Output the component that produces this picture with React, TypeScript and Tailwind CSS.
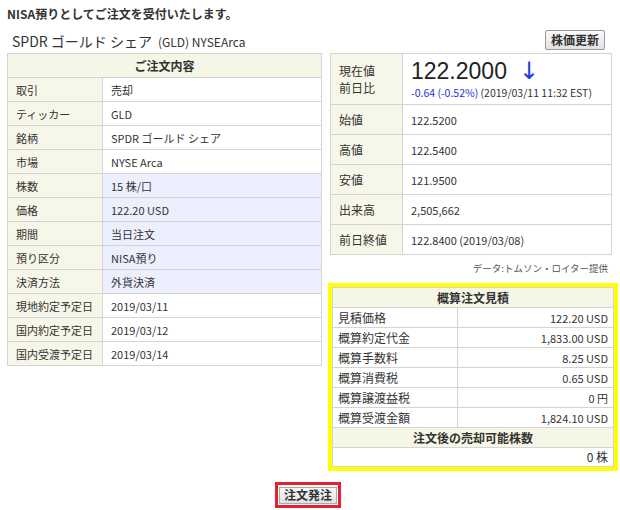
const jp = "font-['Noto_Sans_CJK_JP','Noto_Sans',sans-serif]"

const orderRows: { label: string; value: string; hl?: boolean }[] = [
  { label: '取引', value: '売却' },
  { label: 'ティッカー', value: 'GLD' },
  { label: '銘柄', value: 'SPDR ゴールド シェア' },
  { label: '市場', value: 'NYSE Arca' },
  { label: '株数', value: '15 株/口', hl: true },
  { label: '価格', value: '122.20 USD', hl: true },
  { label: '期間', value: '当日注文', hl: true },
  { label: '預り区分', value: 'NISA預り', hl: true },
  { label: '決済方法', value: '外貨決済', hl: true },
  { label: '現地約定予定日', value: '2019/03/11' },
  { label: '国内約定予定日', value: '2019/03/12' },
  { label: '国内受渡予定日', value: '2019/03/14' },
]

const quoteRows = [
  { label: '始値', value: '122.5200' },
  { label: '高値', value: '122.5400' },
  { label: '安値', value: '121.9500' },
  { label: '出来高', value: '2,505,662' },
  { label: '前日終値', value: '122.8400 (2019/03/08)' },
]

const estimateRows = [
  { label: '見積価格', value: '122.20 USD' },
  { label: '概算約定代金', value: '1,833.00 USD' },
  { label: '概算手数料', value: '8.25 USD' },
  { label: '概算消費税', value: '0.65 USD' },
  { label: '概算譲渡益税', value: '0 円' },
  { label: '概算受渡金額', value: '1,824.10 USD' },
]

export default function App() {
  return (
    <div className={`w-[620px] h-[510px] bg-white text-[#333] text-[12px] ${jp}`}>
      <div className="px-[7px] pt-[5px]">
        <p className="font-bold text-[12px] leading-[18px]">NISA預りとしてご注文を受付いたします。</p>

        {/* Heading + refresh button */}
        <div className="flex items-end justify-between mt-[6px] h-[24px] pr-[8px]">
          <div className="pl-[5px] pb-[1px] flex items-baseline">
            <span className="text-[14px]">SPDR ゴールド シェア</span>
            <span className="text-[12px] ml-[6px]">(GLD) NYSEArca</span>
          </div>
          <button className="mb-[3px] h-[20px] px-[5px] text-[12px] font-bold bg-gradient-to-b from-[#fafafa] to-[#e2e2e2] border border-[#999] rounded-[2px] leading-none">
            株価更新
          </button>
        </div>

        <div className="flex gap-[8px] items-start">
          {/* Order details */}
          <table className="w-[316px] border-collapse border border-[#cfcfcf] text-[11px]">
            <thead>
              <tr className="h-[24px]">
                <th colSpan={2} className="bg-[#f6f6e6] border border-[#d4d4d4] font-bold text-[12px]">
                  ご注文内容
                </th>
              </tr>
            </thead>
            <tbody>
              {orderRows.map((r) => (
                <tr key={r.label} className="h-[24px]">
                  <td className="w-[95px] bg-[#f7f7e9] border border-[#d4d4d4] px-[8px] leading-[16px]">{r.label}</td>
                  <td className={`border border-[#d4d4d4] px-[8px] leading-[16px] ${r.hl ? 'bg-[#eceffd]' : 'bg-white'}`}>
                    {r.value}
                  </td>
                </tr>
              ))}
            </tbody>
          </table>

          {/* Quote + estimate */}
          <div className="w-[283px] flex flex-col">
            <table className="w-[282px] border-collapse border border-[#cfcfcf] text-[12px]">
              <tbody>
                <tr className="h-[51px]">
                  <td className="w-[72px] bg-[#f7f7e9] border border-[#d4d4d4] px-[8px] leading-[17px]">
                    現在値
                    <br />
                    前日比
                  </td>
                  <td className="border border-[#d4d4d4] pl-[8px] align-top pt-[3px]">
                    <div className="flex items-center h-[28px]">
                      <span className="font-['Liberation_Sans',Arial,sans-serif] text-[23px] text-[#222] leading-none">
                        122.2000
                      </span>
                      <span className="ml-[12px] text-[#1a3ee6] text-[24px] leading-none font-['DejaVu_Sans',sans-serif]">↓</span>
                    </div>
                    <div className="text-[10.5px] leading-[15px] whitespace-nowrap">
                      <span className="text-[#2b2fdc]">-0.64 (-0.52%)</span>
                      <span> (2019/03/11 11:32 EST)</span>
                    </div>
                  </td>
                </tr>
                {quoteRows.map((r) => (
                  <tr key={r.label} className="h-[30px]">
                    <td className="bg-[#f7f7e9] border border-[#d4d4d4] px-[8px] leading-[16px]">{r.label}</td>
                    <td className="border border-[#d4d4d4] px-[8px] text-[11px] leading-[16px]">{r.value}</td>
                  </tr>
                ))}
              </tbody>
            </table>
            <p className="text-right text-[9.5px] text-[#555] pr-[5px] mt-[6px] leading-[14px]">
              データ:トムソン・ロイター提供
            </p>

            <div className="mt-[8px] -ml-[2px] w-[290px] border-4 border-[#ffff00]">
              <table className="w-full border-collapse text-[12px]">
                <tbody>
                  <tr className="h-[20px]">
                    <th colSpan={2} className="bg-[#f6f6e6] border border-[#d4d4d4] font-bold leading-[16px]">
                      概算注文見積
                    </th>
                  </tr>
                  {estimateRows.map((r) => (
                    <tr key={r.label} className="h-[20px]">
                      <td className="w-[125px] border border-[#d4d4d4] px-[5px] leading-[16px]">{r.label}</td>
                      <td className="border border-[#d4d4d4] px-[5px] text-right text-[11px] leading-[16px]">{r.value}</td>
                    </tr>
                  ))}
                  <tr className="h-[20px]">
                    <th colSpan={2} className="bg-[#f6f6e6] border border-[#d4d4d4] font-bold leading-[16px]">
                      注文後の売却可能株数
                    </th>
                  </tr>
                  <tr className="h-[19px]">
                    <td colSpan={2} className="border border-[#d4d4d4] px-[5px] text-right leading-[16px]">
                      0 株
                    </td>
                  </tr>
                </tbody>
              </table>
            </div>
          </div>
        </div>

        {/* Submit */}
        <div className="flex justify-center mt-[11px] pr-[4px]">
          <div className="border-[3px] border-[#e5202c] p-[1px]">
            <button className="h-[17px] px-[4px] text-[12px] font-bold leading-none bg-gradient-to-b from-[#fafafa] to-[#e0e0e0] border border-[#aaa]">
              注文発注
            </button>
          </div>
        </div>
      </div>
    </div>
  )
}
